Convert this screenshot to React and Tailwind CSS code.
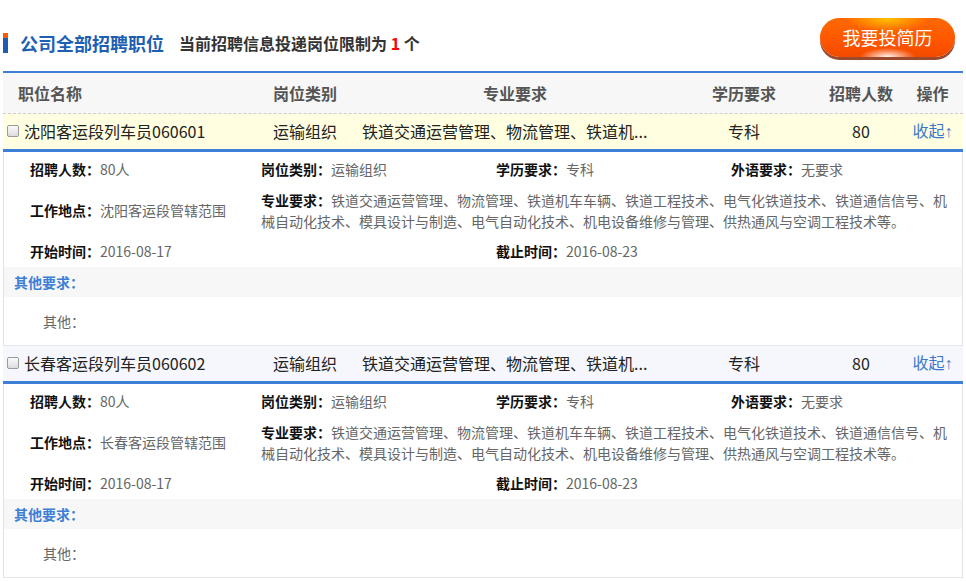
import React from 'react';

const jobs = [
  { name: '沈阳客运段列车员060601', place: '沈阳客运段管辖范围', bg: 'bg-[#fffee0]' },
  { name: '长春客运段列车员060602', place: '长春客运段管辖范围', bg: 'bg-[#f5f7fc]' },
];

const major =
  '铁道交通运营管理、物流管理、铁道机车车辆、铁道工程技术、电气化铁道技术、铁道通信信号、机械自动化技术、模具设计与制造、电气自动化技术、机电设备维修与管理、供热通风与空调工程技术等。';

function Field({ label, value, className = '' }) {
  return (
    <div className={'whitespace-nowrap ' + className}>
      <span className="font-bold text-[#111]">{label}：</span>
      <span className="text-[#666]">{value}</span>
    </div>
  );
}

function Checkbox() {
  return (
    <span className="inline-block w-[12px] h-[12px] rounded-[2px] border border-[#9a9a9a] bg-[linear-gradient(#fafafa,#dcdcdc)] shrink-0" />
  );
}

function Job({ job }) {
  return (
    <div>
      <div className={'flex items-center h-[38px] pb-[1px] text-[16px] text-[#222] border-b-[3px] border-[#3d7fd6] ' + job.bg}>
        <div className="w-[270px] flex items-center pl-[4px] gap-[5px]">
          <Checkbox />
          <span>{job.name}</span>
        </div>
        <div className="w-[89px]">运输组织</div>
        <div className="w-[306px] whitespace-nowrap">铁道交通运营管理、物流管理、铁道机...</div>
        <div className="w-[152px] text-center">专科</div>
        <div className="w-[82px] text-center">80</div>
        <div className="flex-1 text-center text-[#3b78c9]">
          收起<span className="font-['Liberation_Sans','DejaVu_Sans',sans-serif] text-[16px]">↑</span>
        </div>
      </div>
      <div className="border-x border-[#e2e2e2] border-b border-b-[#e3e6ed] text-[14px] leading-[21px]">
        <div className="grid grid-cols-[231px_235px_235px_1fr] grid-rows-[34px_49px_32px] items-center pl-[26px] pr-[8px]">
          <Field label="招聘人数" value="80人" />
          <Field label="岗位类别" value="运输组织" />
          <Field label="学历要求" value="专科" />
          <Field label="外语要求" value="无要求" />
          <Field label="工作地点" value={job.place} />
          <div className="col-span-3">
            <span className="font-bold text-[#111]">专业要求：</span>
            <span className="text-[#666]">{major}</span>
          </div>
          <Field label="开始时间" value="2016-08-17" />
          <div />
          <Field label="截止时间" value="2016-08-23" />
          <div />
        </div>
        <div className="h-[30px] bg-[#f7f7f7] flex items-center pl-[10px] font-bold text-[#3d7fd6]">其他要求：</div>
        <div className="h-[48px] flex items-center pl-[39px] text-[#666]">其他：</div>
      </div>
    </div>
  );
}

export default function App() {
  return (
    <div className="w-[966px] h-[581px] overflow-hidden bg-white px-[3px] font-['Microsoft_YaHei','Noto_Sans_CJK_SC',sans-serif]">
      <div className="flex justify-between h-[71px]">
        <div className="flex items-center mt-[33px] h-[20px]">
          <div className="flex flex-col w-[5px] h-[20px]">
            <div className="h-[5px] bg-[#ff5a00]" />
            <div className="flex-1 bg-[#1d5cb0]" />
          </div>
          <span className="ml-[12px] text-[18px] leading-[20px] font-bold text-[#1f5fb3]">公司全部招聘职位</span>
          <span className="ml-[15px] text-[16px] leading-[20px] font-bold text-[#333]">
            当前招聘信息投递岗位限制为 <span className="text-[#ff0000]">1</span> 个
          </span>
        </div>
        <div className="mt-[18px] mr-[8px]">
          <div className="w-[135px] h-[39px] rounded-full flex items-center justify-center text-white text-[18px] shadow-[0_3px_0_#9c4a2c] bg-[radial-gradient(ellipse_28px_9px_at_50%_100%,rgba(255,255,255,0.95)_0%,rgba(255,255,255,0)_100%),radial-gradient(ellipse_40px_14px_at_50%_0%,#ffc400_0%,rgba(255,170,0,0)_100%),linear-gradient(#ff6a00,#ff5500_60%,#f24a00)]">
            我要投简历
          </div>
        </div>
      </div>
      <div className="border-t-2 border-[#3d7fd6]">
        <div className="flex items-center h-[41px] bg-[#f7f7f7] border-b border-dashed border-[#cfcfcf] text-[16px] font-bold text-[#555]">
          <div className="w-[270px] pl-[15px]">职位名称</div>
          <div className="w-[89px] whitespace-nowrap">岗位类别</div>
          <div className="w-[306px] text-center">专业要求</div>
          <div className="w-[152px] text-center">学历要求</div>
          <div className="w-[82px] text-center">招聘人数</div>
          <div className="flex-1 text-center">操作</div>
        </div>
        {jobs.map((j) => (
          <Job key={j.name} job={j} />
        ))}
      </div>
    </div>
  );
}
